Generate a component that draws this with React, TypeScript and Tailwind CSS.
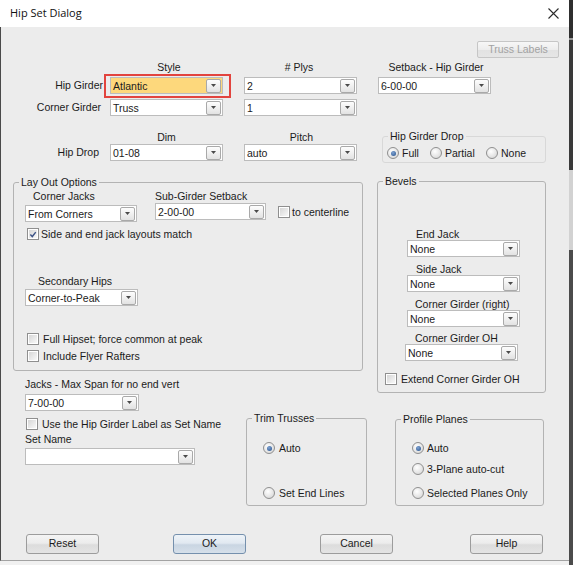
import React from "react";

function Arrow() {
  return (
    <div className="flex items-center justify-center w-[15px] h-[14px] mr-[1px] shrink-0 border border-[#a9a9a9] rounded-[2px] bg-[linear-gradient(to_bottom,#fdfdfd,#f0f0f0_50%,#e2e2e2)]">
      <svg width="5" height="3" viewBox="0 0 5 3">
        <path d="M0 0H5L2.5 3Z" fill="#4a4a4a" />
      </svg>
    </div>
  );
}

function Combo({ value, className }: { value?: string; className: string }) {
  return (
    <div className={"flex items-center h-[17px] shrink-0 border border-[#bcbcbc] " + className}>
      <span className="flex-1 pl-[2px] leading-[12px] whitespace-nowrap overflow-hidden">{value}</span>
      <Arrow />
    </div>
  );
}

function Check({ checked }: { checked?: boolean }) {
  return (
    <div className="w-[12px] h-[12px] shrink-0 border border-[#8f8f8f] bg-white p-px">
      <div className="w-full h-full flex items-center justify-center bg-[linear-gradient(135deg,#d6d6d6,#f8f8f8)]">
        {checked && (
          <svg width="9" height="9" viewBox="0 0 9 9">
            <path d="M1.5 4.5L3.7 6.8L7.6 1.8" fill="none" stroke="#3d5386" strokeWidth="1.6" />
          </svg>
        )}
      </div>
    </div>
  );
}

function Radio({ on }: { on?: boolean }) {
  return (
    <div className="w-[12px] h-[12px] shrink-0 rounded-full border border-[#8f8f8f] flex items-center justify-center bg-[radial-gradient(circle_at_40%_35%,#ffffff,#e6e6e6_55%,#cfcfcf)]">
      {on && <div className="w-[5px] h-[5px] rounded-full bg-[radial-gradient(circle_at_40%_35%,#7fa3d3,#244f8a)]" />}
    </div>
  );
}

function Group({
  title,
  className,
  children,
}: {
  title: string;
  className: string;
  children?: React.ReactNode;
}) {
  return (
    <div className={"relative shrink-0 border rounded-[3px] " + className}>
      <span className="absolute left-[5px] -top-[7px] px-[2px] bg-[#ececec] leading-[12px] whitespace-nowrap">
        {title}
      </span>
      {children}
    </div>
  );
}

function Button({ label, primary }: { label: string; primary?: boolean }) {
  return (
    <div
      className={
        primary
          ? "w-[73px] h-[20px] flex items-center justify-center rounded-[3px] border border-[#7590ad] bg-[linear-gradient(to_bottom,#eef3f8,#e1e9f1_45%,#c9d5e2_55%,#d6e0ea)]"
          : "w-[73px] h-[20px] flex items-center justify-center rounded-[3px] border border-[#9c9c9c] bg-[linear-gradient(to_bottom,#f4f4f4,#ececec_45%,#dcdcdc_55%,#e4e4e4)]"
      }
    >
      {label}
    </div>
  );
}

export default function App() {
  return (
    <div className="w-[573px] h-[565px] flex bg-[#f1f1f1] text-[10.5px] text-[#1b1b1b] overflow-hidden font-['Liberation_Sans',Arial,sans-serif]">
      <div className="w-[569px] h-[561px] flex flex-col shrink-0">
        {/* title bar */}
        <div className="h-[27px] shrink-0 bg-white flex items-center justify-between pl-[10px] pr-[10px]">
          <span className="text-[11px] font-['Open_Sans',sans-serif] text-[#111]">Hip Set Dialog</span>
          <svg width="11" height="11" viewBox="0 0 11 11">
            <path d="M0.5 0.5L10.5 10.5M10.5 0.5L0.5 10.5" stroke="#2b2b2b" strokeWidth="1.1" />
          </svg>
        </div>

        {/* body */}
        <div className="flex-1 flex flex-col bg-[#ececec] border-l border-b border-l-[#4a4a4a] border-b-[#a3a3a3]">
          {/* Truss Labels */}
          <div className="flex justify-end pr-[10px] mt-[14px]">
            <div className="w-[82px] h-[17px] flex items-center justify-center rounded-[2px] border border-[#c6c6c6] bg-[linear-gradient(to_bottom,#f7f7f7,#ededed_50%,#e2e2e2_55%,#e6e6e6)] text-[#a2a2a2]">
              Truss Labels
            </div>
          </div>

          {/* header row 1 */}
          <div className="flex mt-[3px] h-[12px] leading-[12px]">
            <span className="ml-[109px] w-[118px] text-center">Style</span>
            <span className="ml-[16px] w-[110px] text-center"># Plys</span>
            <span className="ml-[24px] w-[116px] text-center whitespace-nowrap">Setback - Hip Girder</span>
          </div>

          {/* row 1 */}
          <div className="flex items-center mt-[4px] h-[17px]">
            <span className="w-[103px] text-right pr-[1px] whitespace-nowrap">Hip Girder</span>
            <div className="relative ml-[6px]">
              <Combo value="Atlantic" className="w-[113px] bg-[#fdd87c]" />
              <div className="absolute -left-[6px] -top-[3px] w-[127px] h-[24px] border-2 border-[#e2443e]" />
            </div>
            <Combo value="2" className="ml-[21px] w-[113px] bg-white" />
            <Combo value="6-00-00" className="ml-[21px] w-[113px] bg-white" />
          </div>

          {/* row 2 */}
          <div className="flex items-center mt-[5px] h-[17px]">
            <span className="w-[100px] text-right whitespace-nowrap">Corner Girder</span>
            <Combo value="Truss" className="ml-[9px] w-[113px] bg-white" />
            <Combo value="1" className="ml-[21px] w-[113px] bg-white" />
          </div>

          {/* hip drop section */}
          <div className="flex items-start mt-[15px]">
            <div className="w-[381px] flex flex-col shrink-0">
              <div className="flex h-[12px] leading-[12px]">
                <span className="ml-[109px] w-[113px] text-center">Dim</span>
                <span className="ml-[22px] w-[113px] text-center">Pitch</span>
              </div>
              <div className="flex items-center mt-[1px] h-[17px]">
                <span className="w-[98px] text-right whitespace-nowrap">Hip Drop</span>
                <Combo value="01-08" className="ml-[11px] w-[113px] bg-white" />
                <Combo value="auto" className="ml-[21px] w-[113px] bg-white" />
              </div>
            </div>
            <Group title="Hip Girder Drop" className="mt-[5px] w-[164px] h-[27px] border-[#d8d8d8]">
              <div className="flex items-center mt-[10px] h-[12px] pl-[4px]">
                <div className="flex items-center w-[43px]">
                  <Radio on />
                  <span className="ml-[3px] leading-[12px]">Full</span>
                </div>
                <div className="flex items-center w-[56px]">
                  <Radio />
                  <span className="ml-[3px] leading-[12px]">Partial</span>
                </div>
                <div className="flex items-center">
                  <Radio />
                  <span className="ml-[3px] leading-[12px]">None</span>
                </div>
              </div>
            </Group>
          </div>

          {/* middle */}
          <div className="flex items-start mt-[18px]">
            {/* left column */}
            <div className="ml-[12px] w-[354px] pt-[1px] flex flex-col shrink-0">
              <Group title="Lay Out Options" className="w-[350px] h-[189px] border-[#b3b3b3]">
                <div className="flex flex-col pl-[11px]">
                  <div className="flex mt-[7px] h-[12px] leading-[12px]">
                    <span className="w-[130px] pl-[8px]">Corner Jacks</span>
                    <span>Sub-Girder Setback</span>
                  </div>
                  <div className="flex items-start">
                    <Combo value="From Corners" className="mt-[3px] w-[112px] bg-white" />
                    <Combo value="2-00-00" className="ml-[18px] mt-[1px] w-[111px] bg-white" />
                    <div className="ml-[12px] mt-[4px] flex items-center">
                      <Check />
                      <span className="ml-[2px] leading-[12px]">to centerline</span>
                    </div>
                  </div>
                  <div className="flex items-center mt-[6px] ml-[2px] h-[12px]">
                    <Check checked />
                    <span className="ml-[2px] leading-[12px]">Side and end jack layouts match</span>
                  </div>
                  <span className="mt-[35px] h-[12px] leading-[12px] pl-[13px]">Secondary Hips</span>
                  <Combo value="Corner-to-Peak" className="mt-[2px] w-[113px] bg-white" />
                  <div className="flex items-center mt-[27px] ml-[2px] h-[12px]">
                    <Check />
                    <span className="ml-[4px] leading-[12px]">Full Hipset; force common at peak</span>
                  </div>
                  <div className="flex items-center mt-[5px] ml-[2px] h-[12px]">
                    <Check />
                    <span className="ml-[4px] leading-[12px]">Include Flyer Rafters</span>
                  </div>
                </div>
              </Group>

              <div className="flex items-start">
                <div className="w-[233px] pl-[12px] flex flex-col shrink-0">
                  <span className="mt-[7px] h-[12px] leading-[12px]">Jacks - Max Span for no end vert</span>
                  <Combo value="7-00-00" className="mt-[4px] w-[114px] bg-white" />
                  <div className="flex items-center mt-[7px] ml-[1px] h-[12px]">
                    <Check />
                    <span className="ml-[4px] leading-[12px]">Use the Hip Girder Label as Set Name</span>
                  </div>
                  <span className="mt-[3px] h-[12px] leading-[12px]">Set Name</span>
                  <Combo value="" className="mt-[3px] w-[170px] bg-white" />
                </div>
                <Group title="Trim Trusses" className="mt-[47px] w-[121px] h-[88px] border-[#b3b3b3]">
                  <div className="flex flex-col pl-[16px]">
                    <div className="flex items-center mt-[23px] h-[12px]">
                      <Radio on />
                      <span className="ml-[4px] leading-[12px]">Auto</span>
                    </div>
                    <div className="flex items-center mt-[33px] h-[12px]">
                      <Radio />
                      <span className="ml-[4px] leading-[12px]">Set End Lines</span>
                    </div>
                  </div>
                </Group>
              </div>
            </div>

            {/* right column */}
            <div className="ml-[10px] flex flex-col shrink-0">
              <Group title="Bevels" className="w-[169px] h-[212px] border-[#b3b3b3]">
                <div className="flex flex-col">
                  <span className="mt-[47px] h-[11px] leading-[11px] pl-[38px]">End Jack</span>
                  <Combo value="None" className="ml-[29px] w-[113px] bg-white" />
                  <span className="mt-[7px] h-[11px] leading-[11px] pl-[38px]">Side Jack</span>
                  <Combo value="None" className="ml-[29px] w-[113px] bg-white" />
                  <span className="mt-[7px] h-[11px] leading-[11px] pl-[37px]">Corner Girder (right)</span>
                  <Combo value="None" className="ml-[29px] w-[113px] bg-white" />
                  <span className="mt-[6px] h-[11px] leading-[11px] pl-[37px]">Corner Girder OH</span>
                  <Combo value="None" className="ml-[27px] w-[113px] bg-white" />
                  <div className="flex items-center mt-[12px] ml-[7px] h-[12px]">
                    <Check />
                    <span className="ml-[4px] leading-[12px]">Extend Corner Girder OH</span>
                  </div>
                </div>
              </Group>
              <Group title="Profile Planes" className="ml-[18px] mt-[26px] w-[149px] h-[87px] border-[#b3b3b3]">
                <div className="flex flex-col pl-[16px]">
                  <div className="flex items-center mt-[22px] h-[12px]">
                    <Radio on />
                    <span className="ml-[3px] leading-[12px]">Auto</span>
                  </div>
                  <div className="flex items-center mt-[9px] h-[12px]">
                    <Radio />
                    <span className="ml-[3px] leading-[12px]">3-Plane auto-cut</span>
                  </div>
                  <div className="flex items-center mt-[12px] h-[12px]">
                    <Radio />
                    <span className="ml-[3px] leading-[12px]">Selected Planes Only</span>
                  </div>
                </div>
              </Group>
            </div>
          </div>

          {/* buttons */}
          <div className="flex mt-[28px] h-[20px]">
            <div className="ml-[25px]">
              <Button label="Reset" />
            </div>
            <div className="ml-[74px]">
              <Button label="OK" primary />
            </div>
            <div className="ml-[74px]">
              <Button label="Cancel" />
            </div>
            <div className="ml-[77px]">
              <Button label="Help" />
            </div>
          </div>
        </div>
      </div>

      {/* background strip at the right */}
      <div className="flex-1 flex flex-col">
        <div className="h-[38px] bg-[#2f2f2f]" />
        <div className="h-[2px] bg-[#9a9a9a]" />
        <div className="h-[130px] bg-[#3a3a3a]" />
        <div className="h-[80px] bg-[#d2d2d2]" />
        <div className="flex-1 bg-[#4b4b4b]" />
      </div>
    </div>
  );
}
